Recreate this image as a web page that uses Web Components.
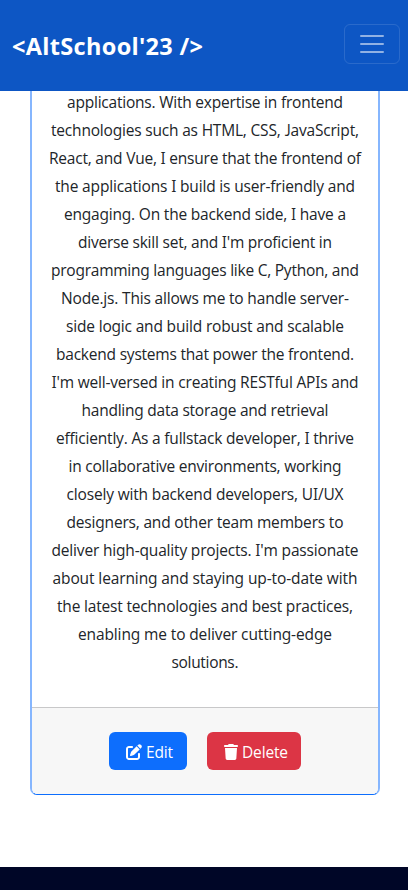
<!DOCTYPE html>
<html lang="en">
<head>
  <meta charset="utf-8">
  <meta name="viewport" content="width=device-width, initial-scale=1">
  <title>AltSchool'23</title>
  <style>
    html, body {
      margin: 0;
      height: 100%;
      overflow: hidden;
      background: #fff;
    }
  </style>
</head>
<body>
<profile-page></profile-page>

<script>
class NavBar extends HTMLElement {
  constructor() {
    super();
    this.attachShadow({ mode: "open" });
  }

  static get styles() {
    return /* css */`
      :host {
        display: flex;
        align-items: center;
        justify-content: space-between;
        box-sizing: border-box;
        height: 91px;
        padding: 0 8px 3px 12px;
        background: #0d56c4;
        color: #fff;
      }

      .brand {
        padding-top: 3px;
        font-size: 23.5px;
        font-weight: 700;
        line-height: 36px;
        white-space: nowrap;
      }

      button {
        display: flex;
        align-items: center;
        justify-content: center;
        box-sizing: border-box;
        width: 56px;
        height: 40px;
        padding: 0;
        border: 1px solid #ffffff1f;
        border-radius: 6px;
        background: transparent;
      }
    `;
  }

  connectedCallback() {
    this.shadowRoot.innerHTML = /* html */`
    <style>${NavBar.styles}</style>
    <fit-text class="brand" width="191"><slot></slot></fit-text>
    <button aria-label="Toggle navigation">
      <svg width="30" height="30" viewBox="0 0 30 30">
        <path stroke="#fff" stroke-opacity=".55" stroke-linecap="round" stroke-width="2" d="M4 7h22M4 15h22M4 23h22"/>
      </svg>
    </button>`;
  }
}

// One line of text, tracked so that it fills the given width
class FitText extends HTMLElement {
  constructor() {
    super();
    this.attachShadow({ mode: "open" });
  }

  connectedCallback() {
    this.shadowRoot.innerHTML = /* html */`
    <style>
      :host { display: block; white-space: nowrap; }
      span { display: inline-block; }
    </style>
    <span><slot></slot></span>`;
    requestAnimationFrame(() => this.fit());
    this.fit();
  }

  fit() {
    const span = this.shadowRoot.querySelector("span");
    const slot = this.shadowRoot.querySelector("slot");
    const text = slot.assignedNodes({ flatten: true }).map(node => node.textContent).join("").trim();
    if (!text) return;

    span.style.letterSpacing = "0";
    span.style.marginRight = "0";
    const spacing = (Number(this.getAttribute("width")) - span.getBoundingClientRect().width) / (text.length - 1);
    span.style.letterSpacing = `${spacing}px`;
    span.style.marginRight = `${-spacing}px`;
  }
}

class ActionButton extends HTMLElement {
  constructor() {
    super();
    this.attachShadow({ mode: "open" });
  }

  static get icons() {
    return {
      edit: /* html */`<svg width="16" height="16" viewBox="0 0 512 512"><path fill="currentColor" d="M471.6 21.7c-21.9-21.9-57.3-21.9-79.2 0L362.3 51.7l97.9 97.9 30.1-30.1c21.9-21.9 21.9-57.3 0-79.2L471.6 21.7zm-299.2 220c-6.1 6.1-10.8 13.6-13.5 21.9l-29.6 88.8c-2.9 8.6-.6 18.1 5.8 24.6s15.9 8.7 24.6 5.8l88.8-29.6c8.2-2.7 15.7-7.4 21.9-13.5L437.7 172.3 339.7 74.3 172.4 241.7zM96 64C43 64 0 107 0 160V416c0 53 43 96 96 96H352c53 0 96-43 96-96V320c0-17.7-14.3-32-32-32s-32 14.3-32 32v96c0 17.7-14.3 32-32 32H96c-17.7 0-32-14.3-32-32V160c0-17.7 14.3-32 32-32h96c17.7 0 32-14.3 32-32s-14.3-32-32-32H96z"/></svg>`,
      trash: /* html */`<svg width="14" height="16" viewBox="0 0 448 512"><path fill="currentColor" d="M135.2 17.7L128 32H32C14.3 32 0 46.3 0 64S14.3 96 32 96H416c17.7 0 32-14.3 32-32s-14.3-32-32-32H320l-7.2-14.3C307.4 6.8 296.3 0 284.2 0H163.8c-12.1 0-23.2 6.8-28.6 17.7zM416 128H32L53.2 467c1.6 25.3 22.6 45 47.9 45H346.9c25.3 0 46.3-19.7 47.9-45L416 128z"/></svg>`
    };
  }

  static get styles() {
    return /* css */`
      :host {
        display: block;
      }

      button {
        display: flex;
        align-items: center;
        gap: 4px;
        box-sizing: border-box;
        width: 100%;
        height: 38px;
        padding: 0 0 0 17px;
        border: 0;
        border-radius: 6px;
        background: var(--color);
        color: #fff;
        font: inherit;
        font-weight: 400;
        line-height: 24px;
      }

      svg {
        display: block;
        margin-top: 2px;
      }

      fit-text {
        margin-top: 2px;
      }
    `;
  }

  connectedCallback() {
    this.shadowRoot.innerHTML = /* html */`
    <style>${ActionButton.styles}</style>
    <button>
      ${ActionButton.icons[this.getAttribute("icon")]}
      <fit-text width="${this.getAttribute("text-width")}"><slot></slot></fit-text>
    </button>`;
  }
}

class ProfileCard extends HTMLElement {
  constructor() {
    super();
    this.attachShadow({ mode: "open" });
  }

  static get styles() {
    return /* css */`
      :host {
        display: block;
        box-sizing: border-box;
        border: solid #0d6efd;
        border-color: #0d6efd #86b6fe;
        border-width: 0 2px 1px;
        border-radius: 0 0 7px 7px;
        overflow: hidden;
        background: #fff;
      }

      .body {
        padding-bottom: 31px;
        text-align: center;
      }

      .footer {
        display: flex;
        gap: 20px;
        box-sizing: border-box;
        height: 87px;
        padding: 24px 0 0 77px;
        border-top: 1px solid #c8c8c9;
        background: #f7f7f7;
      }
    `;
  }

  connectedCallback() {
    this.shadowRoot.innerHTML = /* html */`
    <style>${ProfileCard.styles}</style>
    <div class="body"><slot></slot></div>
    <div class="footer"><slot name="actions"></slot></div>`;
  }
}

class ProfilePage extends HTMLElement {
  constructor() {
    super();
    this.attachShadow({ mode: "open" });
  }

  static get bio() {
    return [
      ["applications. With expertise in frontend", 276],
      ["technologies such as HTML, CSS, JavaScript,", 308],
      ["React, and Vue, I ensure that the frontend of", 312],
      ["the applications I build is user-friendly and", 300],
      ["engaging. On the backend side, I have a", 282],
      ["diverse skill set, and I'm proficient in", 254],
      ["programming languages like C, Python, and", 308],
      ["Node.js. This allows me to handle server-", 288],
      ["side logic and build robust and scalable", 278],
      ["backend systems that power the frontend.", 298],
      ["I'm well-versed in creating RESTful APIs and", 307],
      ["handling data storage and retrieval", 247],
      ["efficiently. As a fullstack developer, I thrive", 298],
      ["in collaborative environments, working", 273],
      ["closely with backend developers, UI/UX", 277],
      ["designers, and other team members to", 277],
      ["deliver high-quality projects. I'm passionate", 307],
      ["about learning and staying up-to-date with", 305],
      ["the latest technologies and best practices,", 296],
      ["enabling me to deliver cutting-edge", 254],
      ["solutions.", 67]
    ];
  }

  static get styles() {
    return /* css */`
      :host {
        display: flex;
        flex-direction: column;
        height: 890px;
        overflow: hidden;
        background: #fff;
        font-family: "Open Sans", "Noto Sans", sans-serif;
        font-size: 15.5px;
        font-feature-settings: "ss03", "salt";
        font-stretch: 93%;
        line-height: 28px;
        color: #212529;
      }

      nav-bar {
        flex: none;
        position: relative;
        z-index: 1;
      }

      main {
        flex: none;
        height: 776px;
      }

      profile-card {
        margin: -3px 28px 0 30px;
      }

      .line {
        font-weight: 370;
      }

      .edit {
        --color: #0d6efd;
        width: 78px;
      }

      .delete {
        --color: #dc3545;
        width: 94px;
      }

      footer {
        flex: 1;
        background: #000627;
      }
    `;
  }

  connectedCallback() {
    const lines = ProfilePage.bio
      .map(([text, width]) => `<fit-text class="line" width="${width}">${text}</fit-text>`)
      .join("");

    this.shadowRoot.innerHTML = /* html */`
    <style>${ProfilePage.styles}</style>
    <nav-bar>&lt;AltSchool'23 /&gt;</nav-bar>
    <main>
      <profile-card>
        ${lines}
        <action-button slot="actions" class="edit" icon="edit" text-width="27">Edit</action-button>
        <action-button slot="actions" class="delete" icon="trash" text-width="46">Delete</action-button>
      </profile-card>
    </main>
    <footer></footer>`;
  }
}

customElements.define("fit-text", FitText);
customElements.define("nav-bar", NavBar);
customElements.define("action-button", ActionButton);
customElements.define("profile-card", ProfileCard);
customElements.define("profile-page", ProfilePage);
</script>
</body>
</html>
